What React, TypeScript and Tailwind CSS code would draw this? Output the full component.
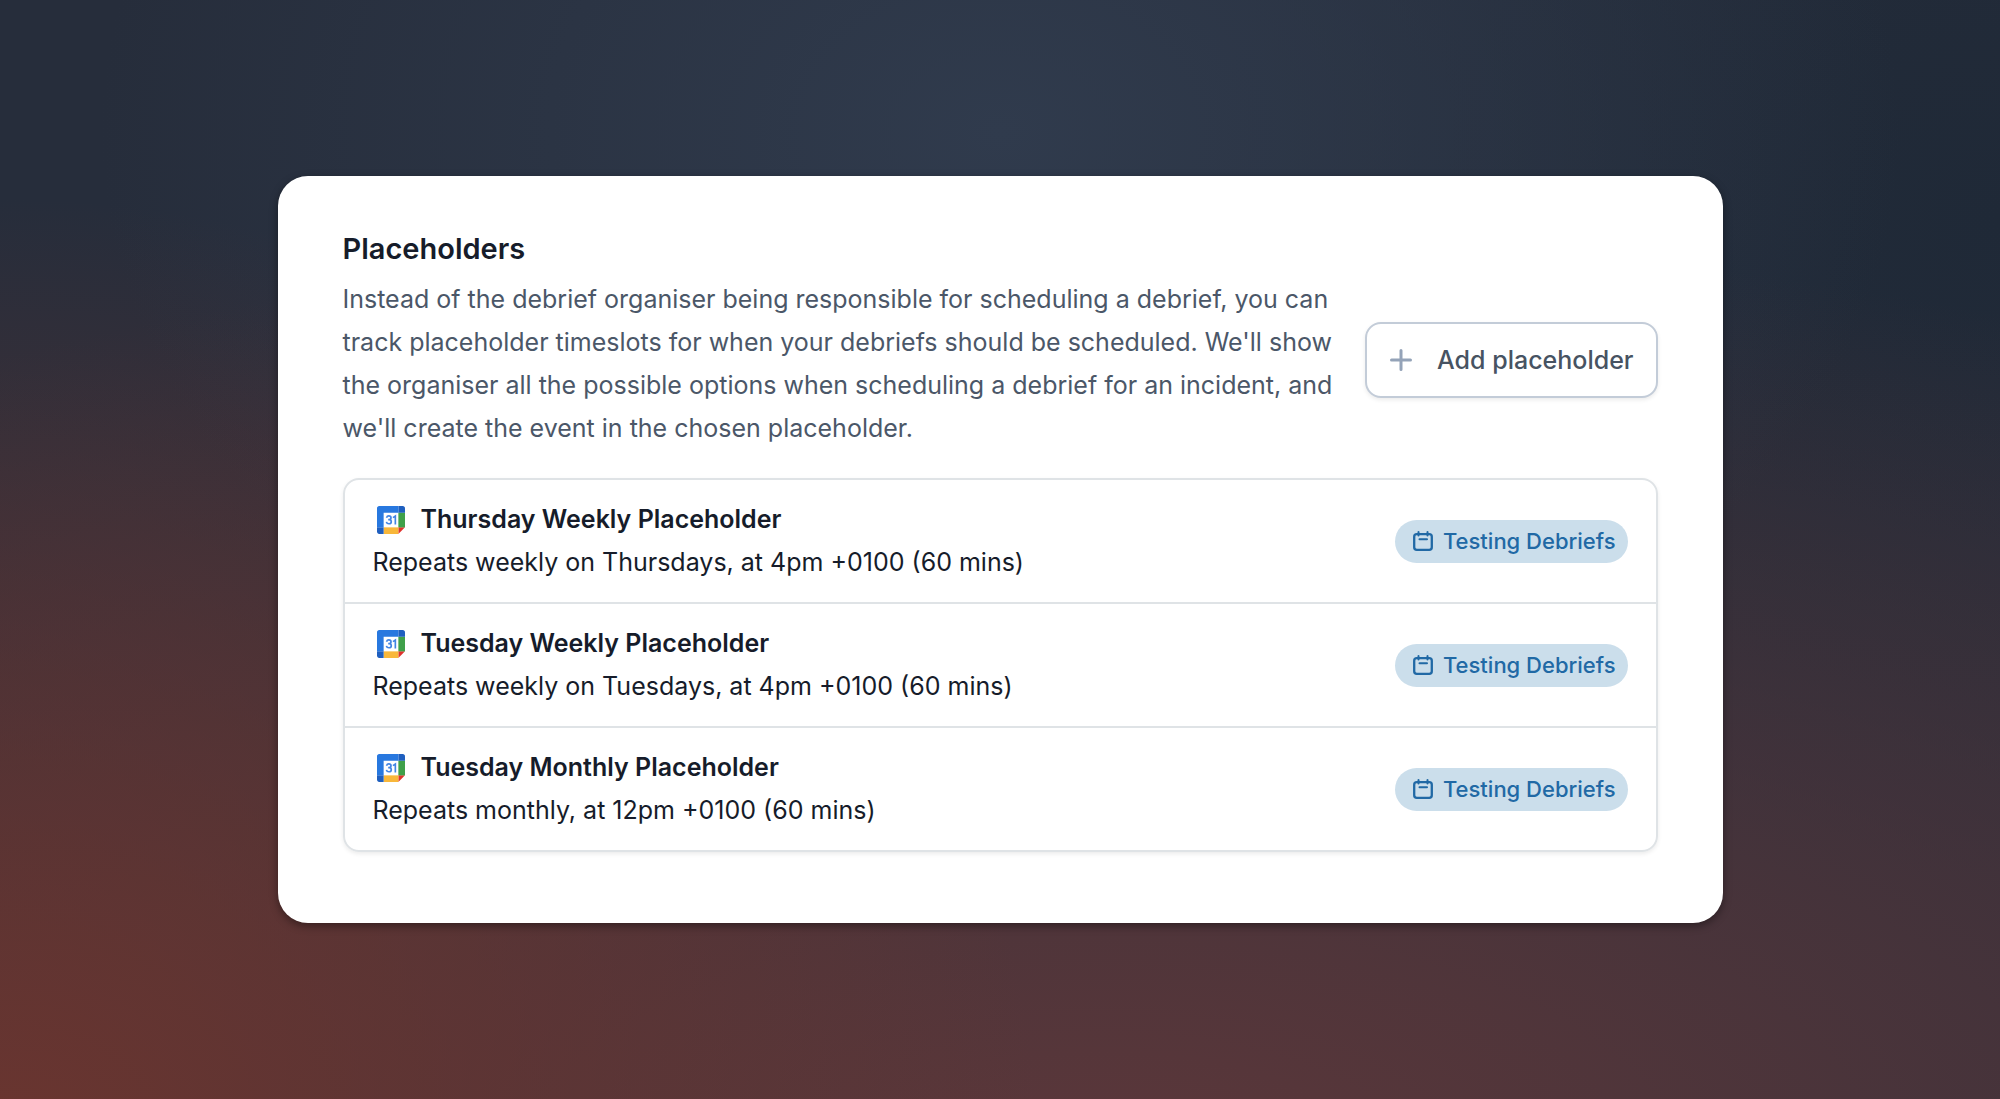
import React from "react";

const placeholders = [
  { name: "Thursday Weekly Placeholder", schedule: "Repeats weekly on Thursdays, at 4pm +0100 (60 mins)" },
  { name: "Tuesday Weekly Placeholder", schedule: "Repeats weekly on Tuesdays, at 4pm +0100 (60 mins)" },
  { name: "Tuesday Monthly Placeholder", schedule: "Repeats monthly, at 12pm +0100 (60 mins)" },
];

function GoogleCalendarIcon() {
  return (
    <svg viewBox="0 0 200 200" className="size-7 shrink-0" aria-hidden="true">
      <path fill="#fff" d="M152.6 47.4H47.4v105.2h105.2z" />
      <path fill="#E0322D" d="M152.6 200 200 152.6h-47.4z" />
      <path fill="#3FA04A" d="M200 47.4h-47.4v105.2H200z" />
      <path fill="#F8B73A" d="M152.6 152.6H47.4V200h105.2z" />
      <path fill="#1F5FBF" d="M0 152.6v31.6C0 192.9 7.1 200 15.8 200h31.6v-47.4z" />
      <path fill="#1F5FBF" d="M200 47.4V15.8C200 7.1 192.9 0 184.2 0h-31.6v47.4z" />
      <path fill="#2878DF" d="M152.6 0H15.8C7.1 0 0 7.1 0 15.8v136.8h47.4V47.4h105.2z" />
      <path
        fill="none"
        stroke="#4285E4"
        strokeWidth="12"
        d="M68 84c3-9 9-13 16-13 10 0 16 6 16 13s-6 13-14 13h-6m6 0c10 0 16 7 16 15s-7 15-17 15c-9 0-16-5-18-14M114 83l17-11v61"
      />
    </svg>
  );
}

function CalendarIcon() {
  return (
    <svg
      viewBox="0 0 20 20"
      className="size-5 shrink-0"
      fill="none"
      stroke="currentColor"
      strokeWidth="2"
      strokeLinecap="round"
      strokeLinejoin="round"
      aria-hidden="true"
    >
      <rect x="1.2" y="3.2" width="17.6" height="15.6" rx="2.6" strokeWidth="2.3" />
      <path d="M5.5 1v3.5M14.5 1v3.5M6.5 8.3h7.5" />
    </svg>
  );
}

function PlusIcon() {
  return (
    <svg
      viewBox="0 0 24 24"
      className="size-6 shrink-0 text-[#94a3b8]"
      fill="none"
      stroke="currentColor"
      strokeWidth="3"
      strokeLinecap="round"
      aria-hidden="true"
    >
      <path d="M12 2.500v19M2.500 12h19" />
    </svg>
  );
}

export default function App() {
  return (
    <main className="flex min-h-screen items-center justify-center bg-[#262d3b] bg-[radial-gradient(ellipse_52%_88%_at_0%_106%,#6b352fff_0%,#6b352f00_100%),radial-gradient(ellipse_110%_85%_at_55%_106%,#5c373aff_0%,#5a373acc_25%,#5a353a00_100%),radial-gradient(ellipse_45%_60%_at_50%_12%,#303b4dff_0%,#303b4d00_100%),radial-gradient(ellipse_40%_60%_at_100%_20%,#1f2937ff_0%,#1f293700_100%)] px-4 font-['Inter',sans-serif] text-[25px] leading-[43px] text-[#161c2a]">
      <section className="w-full max-w-[1445px] rounded-[30px] bg-white px-[65px] pt-[51px] pb-[71px] shadow-[0_3px_8px_rgba(0,0,0,0.4)]">
        <header className="mb-7">
          <h1 className="text-[29px] font-semibold">Placeholders</h1>
          <div className="flex items-center gap-6">
            <p className="flex-1 pt-2 text-[#4b5768]">
              Instead of the debrief organiser being responsible for scheduling a debrief, you can track placeholder
              timeslots for when your debriefs should be scheduled. We'll show the organiser all the possible options
              when scheduling a debrief for an incident, and we'll create the event in the chosen placeholder.
            </p>
            <button
              type="button"
              className="flex h-[76px] shrink-0 items-center gap-6 rounded-2xl border-2 border-[#c3ccd8] bg-white px-[22px] font-medium text-[#475362] shadow-[0_2px_4px_rgba(0,0,0,0.08)]"
            >
              <PlusIcon />
              Add placeholder
            </button>
          </div>
        </header>
        <ul className="divide-y-2 divide-[#dfe3e6] rounded-2xl border-2 border-[#dfe3e6] shadow-[0_2px_4px_rgba(0,0,0,0.08)]">
          {placeholders.map((item) => (
            <li key={item.name} className="flex items-center justify-between px-7 py-[18px]">
              <div>
                <h2 className="flex items-center gap-4 pl-1 font-semibold">
                  <GoogleCalendarIcon />
                  {item.name}
                </h2>
                <p>{item.schedule}</p>
              </div>
              <span className="flex items-center gap-2.5 rounded-full bg-[#cbdeeb] pr-3 pl-[18px] text-[22px] font-medium text-[#2169a5]">
                <CalendarIcon />
                Testing Debriefs
              </span>
            </li>
          ))}
        </ul>
      </section>
    </main>
  );
}
